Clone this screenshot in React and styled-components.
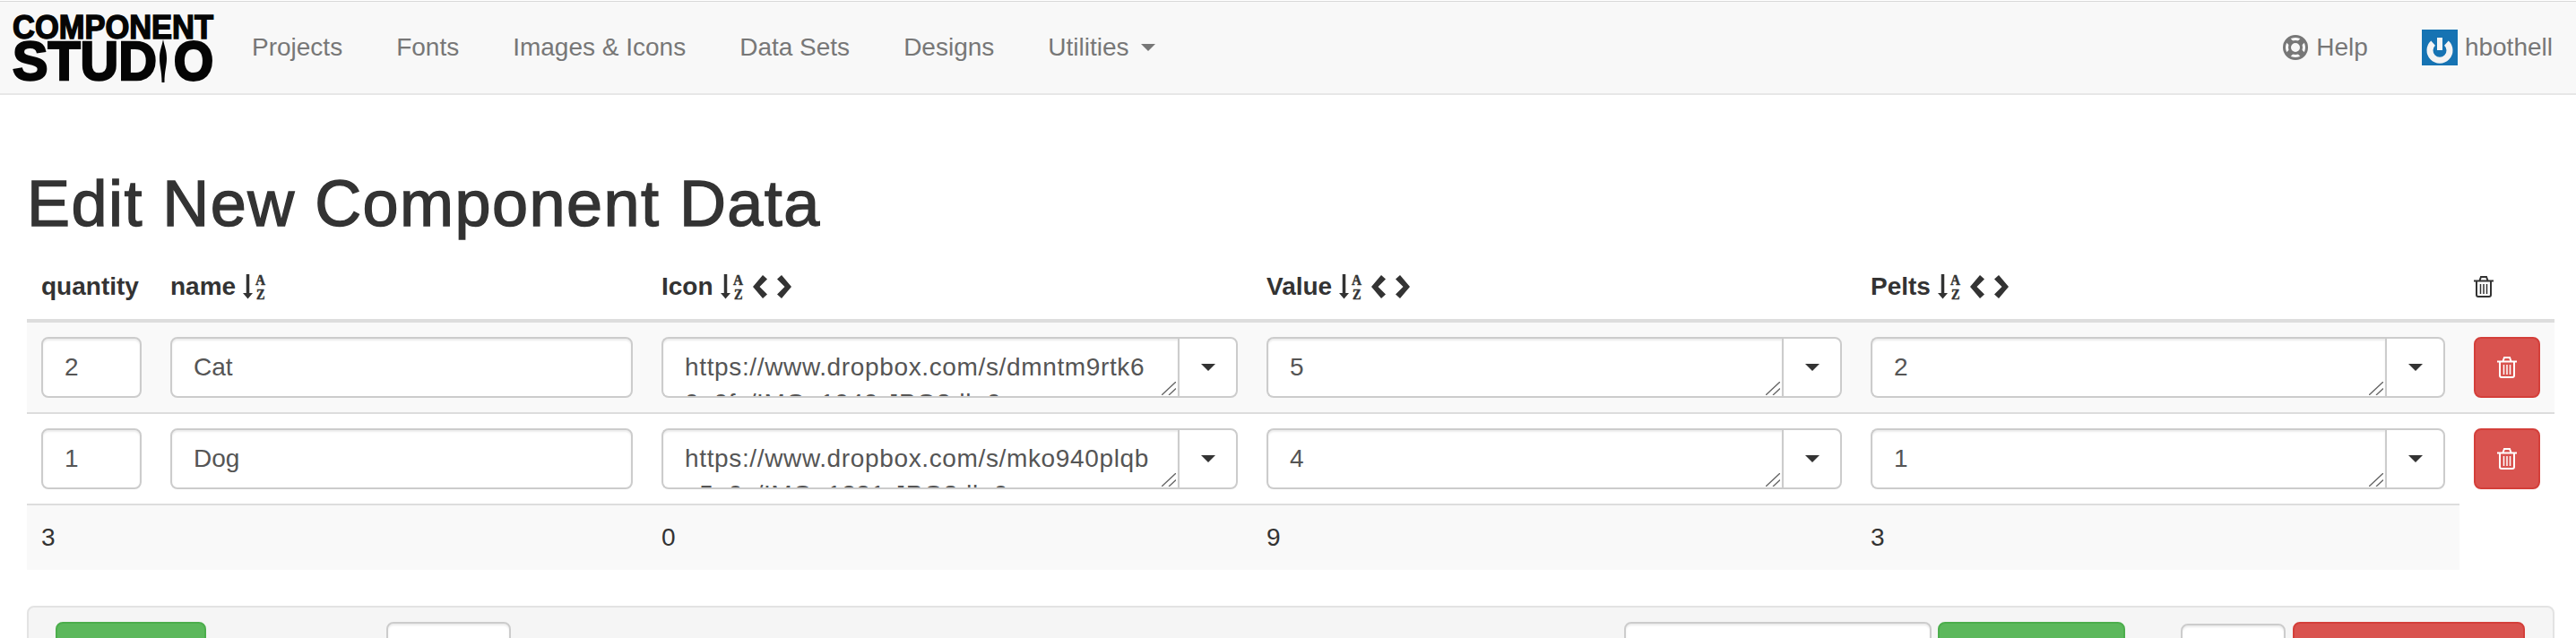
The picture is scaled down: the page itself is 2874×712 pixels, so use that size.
import React from "react";
import styled, { createGlobalStyle } from "styled-components";

const Global = createGlobalStyle`
  html, body {
    margin: 0;
    height: 100%;
    overflow: hidden;
    background: #fff;
  }
  body {
    padding-top: 1px;
    box-sizing: border-box;
    font-family: "Liberation Sans", Arial, sans-serif;
    font-size: 28px;
    line-height: 40px;
    color: #333;
  }
  * {
    box-sizing: border-box;
  }
`;

const Navbar = styled.nav`
  display: flex;
  align-items: center;
  height: 105px;
  padding: 1px 26px 2px 13px;
  background: #f8f8f8;
  border-top: 1px solid #d8d8d8;
  border-bottom: 2px solid #e7e7e7;
`;
const Brand = styled.svg`
  display: block;
  flex: none;
  width: 226px;
  height: 76px;
  margin-right: 42px;
  margin-top: 3px;
  overflow: visible;
`;
const NavLinks = styled.div`
  display: flex;
  align-items: center;
  gap: 60px;
  margin-left: ${(props) => (props.$right ? "auto" : "0")};
`;
const NavLink = styled.a`
  display: flex;
  align-items: center;
  gap: ${(props) => props.$gap || 0}px;
  color: #777;
  white-space: nowrap;
`;
const Caret = styled.span`
  width: 0;
  height: 0;
  border-top: 8px solid ${(props) => props.$color || "#777"};
  border-left: 8px solid transparent;
  border-right: 8px solid transparent;
`;
const Avatar = styled.svg`
  display: block;
  width: 40px;
  height: 40px;
`;
const IconSvg = styled.svg`
  display: block;
  flex: none;
  overflow: visible;
  margin-left: ${(props) => props.$left || 0}px;
`;

const Page = styled.main`
  padding: 0 24px 0 30px;
`;
const Title = styled.h1`
  margin: 82px 0 17px;
  font-size: 72px;
  line-height: 79px;
  font-weight: 400;
  letter-spacing: 1.45px;
  -webkit-text-stroke: 1.4px #333;
`;
const Table = styled.table`
  width: 2820px;
  table-layout: fixed;
  border-collapse: separate;
  border-spacing: 0;
`;
const Th = styled.th`
  width: ${(props) => props.$w}px;
  padding: 16px;
  height: 76px;
  text-align: left;
  vertical-align: bottom;
  font-weight: 700;
  white-space: nowrap;
  border-bottom: 4px solid #ddd;
`;
const HeadCell = styled.div`
  display: flex;
  align-items: center;
  height: 40px;
  gap: 8px;
`;
const Row = styled.tr`
  background: ${(props) => (props.$striped ? "#f9f9f9" : "#fff")};
`;
const Td = styled.td`
  padding: 16px;
  vertical-align: top;
  border-top: ${(props) => (props.$ruled ? "2px solid #ddd" : "0")};
`;
const Input = styled.input`
  display: block;
  width: 100%;
  height: 68px;
  padding: 12px 24px;
  font: inherit;
  color: #555;
  background: #fff;
  border: 2px solid #ccc;
  border-radius: 8px;
  box-shadow: inset 0 2px 2px rgba(0, 0, 0, 0.075);
  outline: none;
`;
const Group = styled.div`
  position: relative;
  display: flex;
  height: 68px;
`;
const Area = styled.textarea`
  flex: 1;
  min-width: 0;
  height: 68px;
  padding: 12px 24px;
  font: inherit;
  letter-spacing: 0.64px;
  color: #555;
  background: #fff;
  border: 2px solid #ccc;
  border-right: 0;
  border-radius: 8px 0 0 8px;
  box-shadow: inset 0 2px 2px rgba(0, 0, 0, 0.075);
  outline: none;
  overflow: hidden;
  resize: none;
  white-space: pre;
`;
const Grip = styled.svg`
  position: absolute;
  right: 69px;
  bottom: 3px;
  width: 16px;
  height: 15px;
`;
const AddOn = styled.button`
  flex: none;
  display: flex;
  align-items: center;
  justify-content: center;
  width: 67px;
  padding: 0;
  background: #fff;
  border: 2px solid #ccc;
  border-radius: 0 8px 8px 0;
`;
const DeleteButton = styled.button`
  display: flex;
  align-items: center;
  justify-content: center;
  width: 74px;
  height: 68px;
  padding: 0;
  background: #d9534f;
  border: 2px solid #d43f3a;
  border-radius: 8px;
`;
const Toolbar = styled.div`
  display: flex;
  align-items: flex-start;
  width: 2820px;
  height: 120px;
  margin-top: 40px;
  padding: 16px 30px;
  background: #f5f5f5;
  border: 2px solid #e3e3e3;
  border-radius: 8px;
`;
const ToolButton = styled.button`
  flex: none;
  width: ${(props) => props.$w}px;
  height: 68px;
  margin-left: ${(props) => props.$left || 0}px;
  padding: 0;
  background: ${(props) => (props.$danger ? "#d9534f" : "#5cb85c")};
  border: 2px solid ${(props) => (props.$danger ? "#d43f3a" : "#4cae4c")};
  border-radius: 8px;
`;
const ToolInput = styled(Input)`
  flex: none;
  width: ${(props) => props.$w}px;
  margin-left: ${(props) => props.$left || 0}px;
  margin-top: ${(props) => props.$top || 0}px;
  height: ${(props) => 68 - (props.$top || 0)}px;
`;

const SortIcon = () => (
  <IconSvg width="26" height="28" viewBox="0 0 26 28">
    <path d="M3.750 0h3.500v21h3.750l-5.500 6.500L0 21h3.750z" fill="#333" />
    <g fontFamily="Liberation Serif" fontWeight="700" fontSize="16" fill="#333" stroke="#333" strokeWidth="0.500">
      <text x="14" y="11.500" textLength="11" lengthAdjust="spacingAndGlyphs">A</text>
      <text x="15" y="27.500" textLength="9.500" lengthAdjust="spacingAndGlyphs">Z</text>
    </g>
  </IconSvg>
);

const Chevrons = () => (
  <IconSvg width="43" height="26" viewBox="0 0 43 26" $left={2}>
    <path d="M11 0l5 4.500L7.500 13l8.500 8.500-5 4.500L0 13z" fill="#333" />
    <path d="M32 0l-5 4.500 8.500 8.500-8.500 8.500 5 4.500 11-13z" fill="#333" />
  </IconSvg>
);

const TrashIcon = ({ color }) => (
  <IconSvg width="22" height="24" viewBox="0 0 22 24" fill="none" stroke={color}>
    <path d="M0 5.500h22M6.500 5l1.500-4h6l1.500 4" strokeWidth="2" />
    <path d="M3 5.500V21a2 2 0 0 0 2 2h12a2 2 0 0 0 2-2V5.500" strokeWidth="2" />
    <path d="M7.500 9v11M11 9v11M14.500 9v11" strokeWidth="1.500" />
  </IconSvg>
);

const LifeRing = () => (
  <IconSvg width="28" height="28" viewBox="0 0 28 28" fill="none" stroke="#777">
    <circle cx="14" cy="14" r="12.500" strokeWidth="3" />
    <circle cx="14" cy="14" r="6.500" strokeWidth="3" />
    <path d="M5 5l5 5M23 5l-5 5M5 23l5-5M23 23l-5-5" strokeWidth="6.500" />
  </IconSvg>
);

const UrlField = ({ value }) => (
  <Group>
    <Area defaultValue={value} />
    <Grip viewBox="0 0 16 15">
      <path d="M0 15L16 0M8 15l8-7.500" stroke="#666" strokeWidth="1.300" fill="none" />
    </Grip>
    <AddOn>
      <Caret $color="#333" />
    </AddOn>
  </Group>
);

const rows = [
  {
    quantity: "2",
    name: "Cat",
    icon: "https://www.dropbox.com/s/dmntm9rtk6\n0e0fy/IMG_1040.JPG?dl=0",
    value: "5",
    pelts: "2",
  },
  {
    quantity: "1",
    name: "Dog",
    icon: "https://www.dropbox.com/s/mko940plqb\n_5e0y/IMG_1231.JPG?dl=0",
    value: "4",
    pelts: "1",
  },
];

const App = () => {
  return (
    <>
      <Global />
      <Navbar>
        <Brand viewBox="0 0 226 76">
          <g fontFamily="Liberation Sans" fontWeight="700" fill="#050505" stroke="#050505">
            <text x="1" y="27" fontSize="37" textLength="224" lengthAdjust="spacingAndGlyphs" strokeWidth="1.500">COMPONENT</text>
            <text x="1" y="73" fontSize="62" textLength="161" lengthAdjust="spacingAndGlyphs" strokeWidth="2.500">STUD</text>
            <text x="181" y="73" fontSize="62" textLength="44" lengthAdjust="spacingAndGlyphs" strokeWidth="3">O</text>
          </g>
          <path d="M169 28c1.500 8 4 12 4 21s-2.500 14-2.500 27h-3c0-13-2.500-18-2.500-27s2.500-13 4-21z" fill="#050505" />
        </Brand>
        <NavLinks>
          <NavLink>Projects</NavLink>
          <NavLink>Fonts</NavLink>
          <NavLink>Images &amp; Icons</NavLink>
          <NavLink>Data Sets</NavLink>
          <NavLink>Designs</NavLink>
          <NavLink $gap={13}>
            Utilities
            <Caret />
          </NavLink>
        </NavLinks>
        <NavLinks $right>
          <NavLink $gap={9}>
            <LifeRing />
            Help
          </NavLink>
          <NavLink $gap={8}>
            <Avatar viewBox="0 0 40 40">
              <rect width="40" height="40" fill="#1673b3" />
              <path d="M12.600 15.100A11 11 0 1 0 27.400 15.100" fill="none" stroke="#f4f4f4" strokeWidth="7" />
              <path d="M20 9v14" stroke="#f4f4f4" strokeWidth="6" />
            </Avatar>
            hbothell
          </NavLink>
        </NavLinks>
      </Navbar>
      <Page>
        <Title>Edit New Component Data</Title>
        <Table>
          <thead>
            <tr>
              <Th $w={144}>
                <HeadCell>quantity</HeadCell>
              </Th>
              <Th $w={548}>
                <HeadCell>
                  name <SortIcon />
                </HeadCell>
              </Th>
              {[
                ["Icon", 675],
                ["Value", 674],
                ["Pelts", 673],
              ].map(([label, w]) => (
                <Th $w={w} key={label}>
                  <HeadCell>
                    {label} <SortIcon /> <Chevrons />
                  </HeadCell>
                </Th>
              ))}
              <Th $w={106}>
                <HeadCell>
                  <TrashIcon color="#333" />
                </HeadCell>
              </Th>
            </tr>
          </thead>
          <tbody>
            {rows.map((row, i) => (
              <Row $striped={i === 0} key={row.name}>
                <Td $ruled={i > 0}>
                  <Input defaultValue={row.quantity} />
                </Td>
                <Td $ruled={i > 0}>
                  <Input defaultValue={row.name} />
                </Td>
                <Td $ruled={i > 0}>
                  <UrlField value={row.icon} />
                </Td>
                <Td $ruled={i > 0}>
                  <UrlField value={row.value} />
                </Td>
                <Td $ruled={i > 0}>
                  <UrlField value={row.pelts} />
                </Td>
                <Td $ruled={i > 0}>
                  <DeleteButton>
                    <TrashIcon color="#fff" />
                  </DeleteButton>
                </Td>
              </Row>
            ))}
          </tbody>
          <tfoot>
            <Row $striped>
              {["3", "", "0", "9", "3"].map((total, i) => (
                <Td $ruled key={i}>
                  {total || "\u00a0"}
                </Td>
              ))}
            </Row>
          </tfoot>
        </Table>
        <Toolbar>
          <ToolButton $w={168} />
          <ToolInput $w={139} $left={201} />
          <ToolInput $w={343} $left={1242} />
          <ToolButton $w={209} $left={7} />
          <ToolInput $w={117} $left={62} $top={2} />
          <ToolButton $w={259} $left={8} $danger />
        </Toolbar>
      </Page>
    </>
  );
};

export default App;
